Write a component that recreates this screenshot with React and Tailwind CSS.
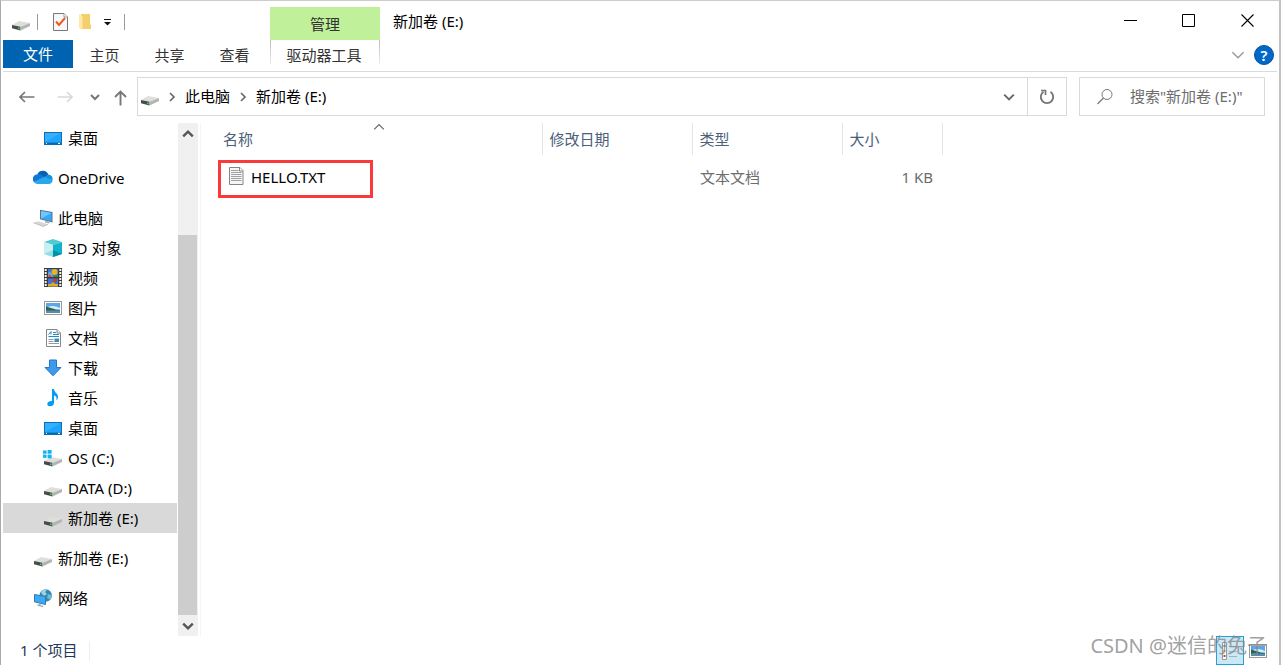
import React from "react";

function DriveIcon({ os = false }) {
  return (
    <svg width="20" height="18" viewBox="0 0 20 18" className="shrink-0" aria-hidden="true">
      <path d="M1 12 8 8 19 10 9.5 13.7Z" fill="#dedede" />
      <path d="M1 12 9.5 13.7V17.500L1 15.300Z" fill="#4a4a4a" />
      <path d="M9.5 13.700 19 10V13.100L9.5 17.500Z" fill="#b4b4b4" />
      <rect x="7" y="14.500" width="1.6" height="1.6" fill="#3fd34a" />
      {os && (
        <g fill="#10b4f0">
          <rect x="0" y="1.5" width="3.6" height="3.2" />
          <rect x="4.6" y="1" width="4" height="3.7" />
          <rect x="0" y="5.6" width="3.6" height="3.2" />
          <rect x="4.6" y="5.6" width="4" height="3.7" />
        </g>
      )}
    </svg>
  );
}

function DesktopIcon() {
  return (
    <svg width="20" height="18" viewBox="0 0 20 18" className="shrink-0" aria-hidden="true">
      <rect x="1.5" y="3.5" width="17" height="12" fill="#1fa4fb" stroke="#0b70b8" />
      <path d="M2 13V4H18Z" fill="#35b0ff" />
      <rect x="2" y="13.6" width="16" height="1.6" fill="#0968a8" />
      <path d="M3 14.4h1M15 14.4h2" stroke="#fff" />
    </svg>
  );
}

function CloudIcon() {
  return (
    <svg width="20" height="18" viewBox="0 0 20 18" className="shrink-0" aria-hidden="true">
      <path d="M4.400 5.200A6 6 0 0 1 15.400 5.600L10 10Z" fill="#0a5fb4" />
      <path d="M4.500 5.200A4.800 4.800 0 0 0 1 13.200L12 8.200 8 5.600Q6.300 4.700 4.500 5.200Z" fill="#0f78d4" />
      <path d="M11 9 15.200 5.500A4.500 4.500 0 0 1 19.400 11.200Z" fill="#1490df" />
      <path d="M1 13.100 11 8 19.500 10.800Q19.700 14.700 16 15H4.600Q2.200 15 1 13.100Z" fill="#28a8ea" />
    </svg>
  );
}

function ComputerIcon() {
  return (
    <svg width="20" height="18" viewBox="0 0 20 18" className="shrink-0" aria-hidden="true">
      <path d="M7 .8 19.500 3V13.500L7 10.200Z" fill="#5d7383" />
      <path d="M8 2 18.500 4V12.200L8 9.400Z" fill="#35a9f8" />
      <path d="M8 2 18.500 4 8 9.400Z" fill="#70c6ff" />
      <path d="M12 11.500v2l4 1 1-1.200-2.500-.5v-.7Z" fill="#a7afb5" />
      <path d="M.5 13.800 5 12.300 15 15.300 10.500 17.500Z" fill="#d3d7da" />
      <path d="M.5 13.800 10.500 17.500 15 15.300" fill="none" stroke="#a9afb4" strokeWidth=".7" />
    </svg>
  );
}

function CubeIcon() {
  return (
    <svg width="20" height="18" viewBox="0 0 20 18" className="shrink-0" aria-hidden="true">
      <path d="M1 3 10 0 19 3 10 6Z" fill="#52c9d4" />
      <path d="M1 3 10 6V18L1 15Z" fill="#c6f0f1" />
      <path d="M19 3 10 6V18L19 15Z" fill="#0fb4cc" />
      <path d="M1 15 10 11V18Z" fill="#8fdfe3" />
      <path d="M10 11 19 15 10 18Z" fill="#078ea9" />
    </svg>
  );
}

function VideoIcon() {
  return (
    <svg width="20" height="20" viewBox="0 0 20 20" className="shrink-0" aria-hidden="true">
      <rect x="1" y="0" width="18" height="19" fill="#3b3b3b" />
      <path d="M2.700 1v18M17.300 1v18" stroke="#f4f4f4" strokeWidth="2" strokeDasharray="2 1" />
      <rect x="5" y="1" width="10" height="8" fill="#3f74d8" />
      <rect x="5" y="10.500" width="10" height="8" fill="#3f74d8" />
      <circle cx="11.500" cy="4" r="3" fill="#e9b51c" />
      <path d="M9 6 6 3.500 5 6.500V9h5Z" fill="#5cc0ec" />
      <path d="M6 6l2 1 1 2H5Z" fill="#e44b45" />
      <path d="M11 7h4v2h-4Z" fill="#3a8b36" />
      <circle cx="12" cy="12.500" r="2" fill="#c93a28" />
      <path d="M5 16h3l2-2 2 2h3v2.500H5Z" fill="#e1ad20" />
    </svg>
  );
}

function PictureIcon() {
  return (
    <svg width="20" height="18" viewBox="0 0 20 18" className="shrink-0" aria-hidden="true">
      <rect x="1.500" y="2.500" width="17" height="13" fill="#fff" stroke="#999" />
      <rect x="3" y="4" width="14" height="10" fill="#5ea6ea" />
      <path d="M3 9Q9 5 17 9v3H3Z" fill="#d9edf9" />
      <path d="M3 7.500 8 9 13 10.500 17 10.800V12H3Z" fill="#2d6254" />
      <path d="M3 11.500H17V14H3Z" fill="#518eaf" />
    </svg>
  );
}

function DocumentIcon() {
  return (
    <svg width="20" height="18" viewBox="0 0 20 18" className="shrink-0" aria-hidden="true">
      <path d="M3.500 .5H14L17.500 4V17.500H3.500Z" fill="#fff" stroke="#888" />
      <path d="M14 .5V4h3.500" fill="#eee" stroke="#888" />
      <path d="M5.500 5.500 8 2.500V5.500M10 3.500h3M10 5.500h6M5.500 7.500h10.500" fill="none" stroke="#2188c8" />
      <path d="M5.500 10.500h5M5.500 12.500h5M5.500 14.500h10.500" stroke="#999" />
      <rect x="11.500" y="9.500" width="4.500" height="3.500" fill="#3b8db2" />
    </svg>
  );
}

function DownloadIcon() {
  return (
    <svg width="20" height="18" viewBox="0 0 20 18" className="shrink-0" aria-hidden="true">
      <path d="M6.500 1h7v7.500H18L10 16.800 2 8.500h4.500Z" fill="#3b9aed" stroke="#2c76bd" />
    </svg>
  );
}

function MusicIcon() {
  return (
    <svg width="20" height="18" viewBox="0 0 20 18" className="shrink-0" aria-hidden="true">
      <path d="M9 0h2C11.500 4 15.500 4.500 15 8.500 14.800 10 14 11 13.300 11.500 14.300 8.500 13 7 11 6.500V14C11 16 9 17.300 7 17.300 5.300 17.300 4.300 16.300 4.300 15 4.300 13 6.500 11.800 9 12Z" fill="#079cf3" />
    </svg>
  );
}

function NetworkIcon() {
  return (
    <svg width="20" height="18" viewBox="0 0 20 18" className="shrink-0" aria-hidden="true">
      <circle cx="12.700" cy="6.500" r="6.200" fill="#3489b4" />
      <path d="M8 3Q10 0 14 .7L12 3 14 5 11 7 9 5Z" fill="#9fd4e6" />
      <path d="M15 5 19 6.500 17 10.500 14 9Z" fill="#73bcd8" />
      <path d="M1.500 5.500 12.500 7.500V15.500L1.500 12.800Z" fill="#38aafb" stroke="#3e789e" />
      <path d="M7 14.500v2M4.500 16 10 17.500" stroke="#9ca8af" strokeWidth="1.300" />
    </svg>
  );
}

function TextFileIcon() {
  return (
    <svg width="16" height="20" viewBox="0 0 16 20" className="shrink-0" aria-hidden="true">
      <path d="M1.500 .5H12L15 3.500V17.500H1.500Z" fill="#f6f6f6" stroke="#858585" />
      <path d="M11.500 .5V4H15" fill="#fff" stroke="#858585" />
      <path d="M3 3.500h7.500M3 5.500h10.500M3 7.500h10.500M3 9.500h10.500M3 11.500h10.500M3 13.500h10.500" stroke="#a0a0a0" />
    </svg>
  );
}

function Chevron({ dir = "down", className = "", size = 10, width = 2 }) {
  const paths = { down: "M1 3 5 7 9 3", up: "M1 7 5 3 9 7", right: "M3 1 7 5 3 9" };
  return (
    <svg width={size} height={size} viewBox="0 0 10 10" className={className} aria-hidden="true">
      <path d={paths[dir]} fill="none" stroke="currentColor" strokeWidth={width} />
    </svg>
  );
}

const groups = [
  [{ label: "桌面", icon: <DesktopIcon />, nested: true }],
  [{ label: "OneDrive", icon: <CloudIcon /> }],
  [
    { label: "此电脑", icon: <ComputerIcon /> },
    { label: "3D 对象", icon: <CubeIcon />, nested: true },
    { label: "视频", icon: <VideoIcon />, nested: true },
    { label: "图片", icon: <PictureIcon />, nested: true },
    { label: "文档", icon: <DocumentIcon />, nested: true },
    { label: "下载", icon: <DownloadIcon />, nested: true },
    { label: "音乐", icon: <MusicIcon />, nested: true },
    { label: "桌面", icon: <DesktopIcon />, nested: true },
    { label: "OS (C:)", icon: <DriveIcon os />, nested: true },
    { label: "DATA (D:)", icon: <DriveIcon />, nested: true },
    { label: "新加卷 (E:)", icon: <DriveIcon />, nested: true, selected: true },
  ],
  [{ label: "新加卷 (E:)", icon: <DriveIcon /> }],
  [{ label: "网络", icon: <NetworkIcon /> }],
];

function TitleBar() {
  return (
    <header className="mr-0.5 flex h-[71px] border-b border-[#dadbdc]">
      <div className="flex w-[267px] shrink-0 flex-col">
        <div className="flex h-[39px] items-center pt-0.5 pl-2">
          <DriveIcon />
          <span className="ml-1.5 h-4 w-px bg-[#999]" />
          <button aria-label="属性" className="ml-3.5">
            <svg width="18" height="20" viewBox="0 0 18 20" aria-hidden="true">
              <path d="M1.500 1.500H12L15.500 5V18.500H1.500Z" fill="#f7f8fa" stroke="#777" />
              <path d="M12 1.500V5h3.500" fill="#fff" stroke="#999" />
              <path d="M4 9.500 7 13 13 6" fill="none" stroke="#f05a1a" strokeWidth="2" />
            </svg>
          </button>
          <button aria-label="新建文件夹" className="ml-2">
            <svg width="14" height="18" viewBox="0 0 14 18" aria-hidden="true">
              <path d="M3 1h9v10l1 1v4H3Z" fill="#f5cf6b" />
              <path d="M1 1 4.500 3.500V17L1 15Z" fill="#ffe9a8" />
            </svg>
          </button>
          <button aria-label="自定义快速访问工具栏" className="ml-[11px]">
            <svg width="9" height="10" viewBox="0 0 9 10" aria-hidden="true">
              <path d="M1 2.500h7" stroke="#111" />
              <path d="M1 5h7L4.500 8.500Z" fill="#111" />
            </svg>
          </button>
          <span className="ml-3 h-4 w-px bg-[#999]" />
        </div>
        <nav className="flex text-[#333]">
          <button className="h-7 w-[70px] bg-[#0063b1] text-white">文件</button>
          <button className="h-[30px] w-[65px] pr-0.5">主页</button>
          <button className="h-[30px] w-[65px] pr-0.5">共享</button>
          <button className="h-[30px] w-[65px] pr-0.5">查看</button>
        </nav>
      </div>
      <div className="flex w-[110px] shrink-0 flex-col pt-1.5 text-[#333]">
        <div className="flex h-[33px] items-center justify-center bg-[#c1f09b]">管理</div>
        <div className="flex">
          <span className="h-6 w-px bg-linear-to-b from-[#bbb] to-[#eee]" />
          <button className="h-[30px] flex-1 pr-0.5">驱动器工具</button>
          <span className="h-6 w-px bg-linear-to-b from-[#bbb] to-[#eee]" />
        </div>
      </div>
      <h1 className="flex h-10 flex-1 items-center pl-[13px]">新加卷 (E:)</h1>
      <div className="flex flex-col">
        <div className="flex h-[39px]">
          <button aria-label="最小化" className="flex w-[58px] items-center justify-center">
            <svg width="13" height="13" viewBox="0 0 13 13" aria-hidden="true"><path d="M0 6.500h13" stroke="#000" /></svg>
          </button>
          <button aria-label="最大化" className="flex w-[58px] items-center justify-center">
            <svg width="13" height="13" viewBox="0 0 13 13" aria-hidden="true"><path d="M.5.5h12v12H.5Z" fill="none" stroke="#000" /></svg>
          </button>
          <button aria-label="关闭" className="flex w-[60px] items-center justify-center">
            <svg width="13" height="13" viewBox="0 0 13 13" aria-hidden="true"><path d="m.5.5 12 12M12.500.5l-12 12" stroke="#000" strokeWidth="1.100" /></svg>
          </button>
        </div>
        <div className="flex h-[30px] items-center justify-end gap-[9px] pr-[3px]">
          <button aria-label="展开功能区" className="text-[#999]">
            <Chevron size={14} width={1} />
          </button>
          <button aria-label="帮助" className="flex size-5 items-center justify-center rounded-full border border-[#0a4f94] bg-[#0068c8] font-semibold text-white">?</button>
        </div>
      </div>
    </header>
  );
}

function AddressBar() {
  return (
    <div className="flex h-[51px] items-start pt-[5px] pr-3.5 text-[#222]">
      <div className="flex h-[39px] w-[134px] shrink-0 items-center pl-4 text-[#777]">
        <button aria-label="后退">
          <svg width="16" height="12" viewBox="0 0 16 12" aria-hidden="true"><path d="M15.500 6H1M6 1 1 6l5 5" fill="none" stroke="currentColor" strokeWidth="1.700" /></svg>
        </button>
        <button aria-label="前进" className="ml-[22px] text-[#d9d9d9]">
          <svg width="16" height="12" viewBox="0 0 16 12" aria-hidden="true"><path d="M.5 6H15M10 1l5 5-5 5" fill="none" stroke="currentColor" strokeWidth="1.700" /></svg>
        </button>
        <button aria-label="最近浏览的位置" className="ml-[17px]"><Chevron size={10} /></button>
        <button aria-label="上移" className="ml-3.5">
          <svg width="13" height="16" viewBox="0 0 13 16" className="mt-0.5" aria-hidden="true"><path d="M6.500 15.500V1.500M1 7l5.500-5.500L12 7" fill="none" stroke="currentColor" strokeWidth="1.900" /></svg>
        </button>
      </div>
      <div className="flex h-[39px] flex-1 items-center border border-[#d9d9d9] pl-0.5 text-black">
        <DriveIcon />
        <Chevron dir="right" className="ml-[7px] text-[#666]" width={1.6} />
        <button className="ml-2 pb-0.5">此电脑</button>
        <Chevron dir="right" className="ml-2 text-[#666]" width={1.6} />
        <button className="ml-2 pb-0.5">新加卷 (E:)</button>
        <button aria-label="以前的位置" className="ml-auto flex h-full w-9 items-center justify-center text-[#666]"><Chevron size={12} width={1.6} /></button>
        <button aria-label="刷新" className="flex h-full w-[39px] items-center justify-center border-l border-[#d9d9d9] text-[#777]">
          <svg width="16" height="16" viewBox="0 0 16 16" aria-hidden="true">
            <path d="M4.500 2.800A6.200 6.200 0 1 0 11.500 2.800" fill="none" stroke="currentColor" strokeWidth="1.900" />
            <path d="M2 1.500h4.500V6" fill="none" stroke="currentColor" strokeWidth="1.700" />
          </svg>
        </button>
      </div>
      <label className="ml-3 flex h-[39px] w-[186px] items-center border border-[#d9d9d9] pl-4">
        <svg width="18" height="18" viewBox="0 0 18 18" className="shrink-0" aria-hidden="true">
          <circle cx="11" cy="6.500" r="5" fill="none" stroke="#777" />
          <path d="M7.500 10 1.500 16" stroke="#777" strokeWidth="1.200" />
        </svg>
        <input type="search" aria-label="搜索" placeholder={'搜索"新加卷 (E:)"'} className="ml-4 w-full min-w-0 pb-0.5 outline-none placeholder:text-[#6d6d6d]" />
      </label>
    </div>
  );
}

function Sidebar() {
  return (
    <aside className="flex shrink-0">
      <nav className="flex w-[174px] flex-col gap-2.5">
        {groups.map((group, g) => (
          <ul key={g}>
            {group.map((item, i) => (
              <li key={i}>
                <a
                  href="#"
                  className={`flex h-[30px] items-center gap-[5px] ${item.nested ? "pl-10" : "pl-[30px]"} ${item.selected ? "bg-[#d9d9d9]" : ""}`}
                >
                  {item.icon}
                  <span>{item.label}</span>
                </a>
              </li>
            ))}
          </ul>
        ))}
      </nav>
      <div className="ml-px flex w-5 flex-col bg-[#f0f0f0] text-[#555]">
        <button aria-label="向上滚动" className="flex h-[21px] items-center justify-center pr-px"><Chevron dir="up" size={12} /></button>
        <div className="flex flex-1 flex-col pt-[91px] pr-px">
          <div className="flex-1 bg-[#cdcdcd]" />
        </div>
        <button aria-label="向下滚动" className="flex h-[21px] items-center justify-center pr-px"><Chevron size={12} /></button>
      </div>
    </aside>
  );
}

function FileList() {
  return (
    <main className="ml-0.5 flex-1 border-l border-[#f5f5f5] pl-[15px]">
      <table className="w-[726px] table-fixed border-collapse text-left">
        <colgroup>
          <col className="w-[326px]" />
          <col className="w-[150px]" />
          <col className="w-[150px]" />
          <col className="w-[100px]" />
        </colgroup>
        <thead className="text-[#4c607a]">
          <tr className="h-8">
            <th className="relative border-r border-[#e5e5e5] p-0 pl-[7px] font-normal">
              名称
              <Chevron dir="up" size={12} width={1} className="absolute -top-0.5 left-[157px] text-[#666]" />
            </th>
            <th className="border-r border-[#e5e5e5] p-0 pl-[7px] font-normal">修改日期</th>
            <th className="border-r border-[#e5e5e5] p-0 pl-[7px] font-normal">类型</th>
            <th className="border-r border-[#e5e5e5] p-0 pl-[7px] font-normal">大小</th>
          </tr>
        </thead>
        <tbody className="text-[#6d6d6d]">
          <tr className="h-11">
            <td className="relative p-0 pl-3 text-black">
              <span className="flex items-center gap-[7px]"><TextFileIcon />HELLO.TXT</span>
              <span className="absolute top-[5px] left-0.5 h-[38px] w-[155px] border-3 border-[#fa3a3a]" />
            </td>
            <td className="p-0 pl-2" />
            <td className="p-0 pl-2">文本文档</td>
            <td className="p-0 pr-[9px] text-right">1 KB</td>
          </tr>
        </tbody>
      </table>
    </main>
  );
}

function StatusBar() {
  return (
    <footer className="relative flex h-[29px] items-center pr-[11px] pl-[17px] text-[#1e395b]">
      <span className="pb-0.5">1 个项目</span>
      <span className="ml-3 h-5 w-px bg-[#eee]" />
      <button aria-label="详细信息" className="ml-auto flex h-[29px] w-7 items-center border border-[#26a0da] bg-[#cbe8f6] pl-1">
        <svg width="18" height="18" viewBox="0 0 18 18" aria-hidden="true">
          <path d="M1.500 .5h4v17h-4Z" fill="#fff" stroke="#999" />
          <path d="M8 4.500h8M8 9.500h8M8 14.500h8" stroke="#9cb5c2" />
          <path d="M2.500 3h2v2h-2Z" fill="#3d83b8" />
          <path d="M2.500 8h2v2h-2Z" fill="#c2a336" />
          <path d="M2.500 13h2v2h-2Z" fill="#cf3f29" />
        </svg>
      </button>
      <button aria-label="大缩略图" className="ml-1"><PictureIcon /></button>
      <span className="pointer-events-none absolute top-0 right-3 text-[20px] leading-5 whitespace-nowrap text-[#888]/80">CSDN @迷信的兔子</span>
    </footer>
  );
}

export default function App() {
  return (
    <div className="flex min-h-screen flex-col border-t border-r-2 border-l border-t-[#ccc] border-r-[#c2c2c2] border-l-[#aaa] bg-white pl-0.5 font-['Noto_Sans','Noto_Sans_CJK_SC',sans-serif] text-[15px] leading-5 text-black">
      <TitleBar />
      <AddressBar />
      <div className="flex flex-1">
        <Sidebar />
        <FileList />
      </div>
      <StatusBar />
    </div>
  );
}
